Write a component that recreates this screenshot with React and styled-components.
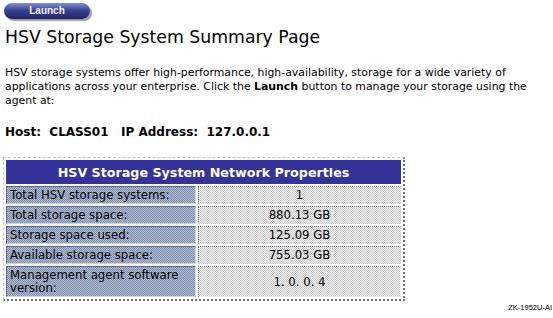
import React from "react"
import styled, { createGlobalStyle } from "styled-components"

const rows = [
  ["Total HSV storage systems:", "1"],
  ["Total storage space:", "880.13 GB"],
  ["Storage space used:", "125.09 GB"],
  ["Available storage space:", "755.03 GB"],
  ["Management agent software version:", "1. 0. 0. 4"],
]

export default function App() {
  return (
    <S_Page>
      <GlobalStyle />
      <S_Launch>Launch</S_Launch>
      <S_Title>HSV Storage System Summary Page</S_Title>
      <S_Intro>
        HSV storage systems offer high-performance, high-availability, storage
        for a wide variety of applications across your enterprise. Click the{" "}
        <b>Launch</b> button to manage your storage using the agent at:
      </S_Intro>
      <S_Host>
        Host:&nbsp; CLASS01&nbsp;&nbsp; IP Address:&nbsp; 127.0.0.1
      </S_Host>
      <S_Table>
        <thead>
          <tr>
            <S_Head colSpan={2}>HSV Storage System Network Properties</S_Head>
          </tr>
        </thead>
        <tbody>
          {rows.map(([label, value]) => (
            <tr key={label}>
              <S_Label>{label}</S_Label>
              <S_Value>{value}</S_Value>
            </tr>
          ))}
        </tbody>
      </S_Table>
      <S_Caption>ZK-1952U-AI</S_Caption>
    </S_Page>
  )
}

// STYLE
const GlobalStyle = createGlobalStyle`
  body {
    margin: 0;
    background: #fff;
    font-family: "DejaVu Sans", Verdana, sans-serif;
    color: #000;
  }
`

const S_Page = styled.div`
  width: 553px;
  height: 318px;
  padding: 3px 0 0 4px;
  box-sizing: border-box;
  display: flex;
  flex-direction: column;
  align-items: flex-start;
`

const S_Launch = styled.div`
  width: 86px;
  height: 16px;
  border-radius: 8px;
  background: linear-gradient(#8890c8, #3a4494 45%, #1e2466);
  box-shadow: 2px 2px 1px #9a9aa8;
  color: #f0f0ff;
  font-family: "Liberation Sans", Arial, sans-serif;
  font-weight: 700;
  font-size: 10px;
  line-height: 16px;
  text-align: center;
`

const S_Title = styled.h1`
  margin: 7px 0 0 1px;
  font-size: 17.3px;
  font-weight: 400;
  line-height: 22px;
`

const S_Intro = styled.p`
  margin: 18px 0 0 1px;
  width: 548px;
  font-size: 10.9px;
  line-height: 14px;

  b {
    font-size: inherit;
  }
`

const S_Host = styled.div`
  margin: 16px 0 0 1px;
  font-size: 12px;
  font-weight: 700;
  line-height: 16px;
`

const S_Table = styled.table`
  margin-top: 17px;
  margin-left: -1px;
  width: 402px;
  border-collapse: separate;
  border-spacing: 2px;
  border: 1px dashed #c8c8c8;
  border-right: 2px dotted #707070;
  border-bottom: 2px dotted #707070;
  font-size: 11.7px;
`

const S_Head = styled.th`
  height: 24px;
  padding: 0;
  background: #333399;
  color: #fff;
  font-size: 12.7px;
  font-weight: 700;
`

const S_Label = styled.td`
  width: 182px;
  padding: 2px 3px 1px;
  border: 1px solid #5a6a8a;
  border-right-color: #d0d4dc;
  border-bottom-color: #d0d4dc;
  background: repeating-conic-gradient(#b4bdd0 0 25%, #7a8db0 0 50%) 0 0 / 2px 2px;
  line-height: 13px;
`

const S_Value = styled.td`
  padding: 2px 3px 1px;
  border: 1px dotted #707070;
  border-right-color: #e8e8e8;
  border-bottom-color: #e8e8e8;
  background: repeating-conic-gradient(#f6f6f6 0 25%, #c8c8c8 0 50%) 0 0 / 2px 2px;
  text-align: center;
  line-height: 13px;
`

const S_Caption = styled.div`
  align-self: flex-end;
  margin: 2px 1px 0 0;
  font-family: "Liberation Sans", Arial, sans-serif;
  font-size: 7.5px;
`
